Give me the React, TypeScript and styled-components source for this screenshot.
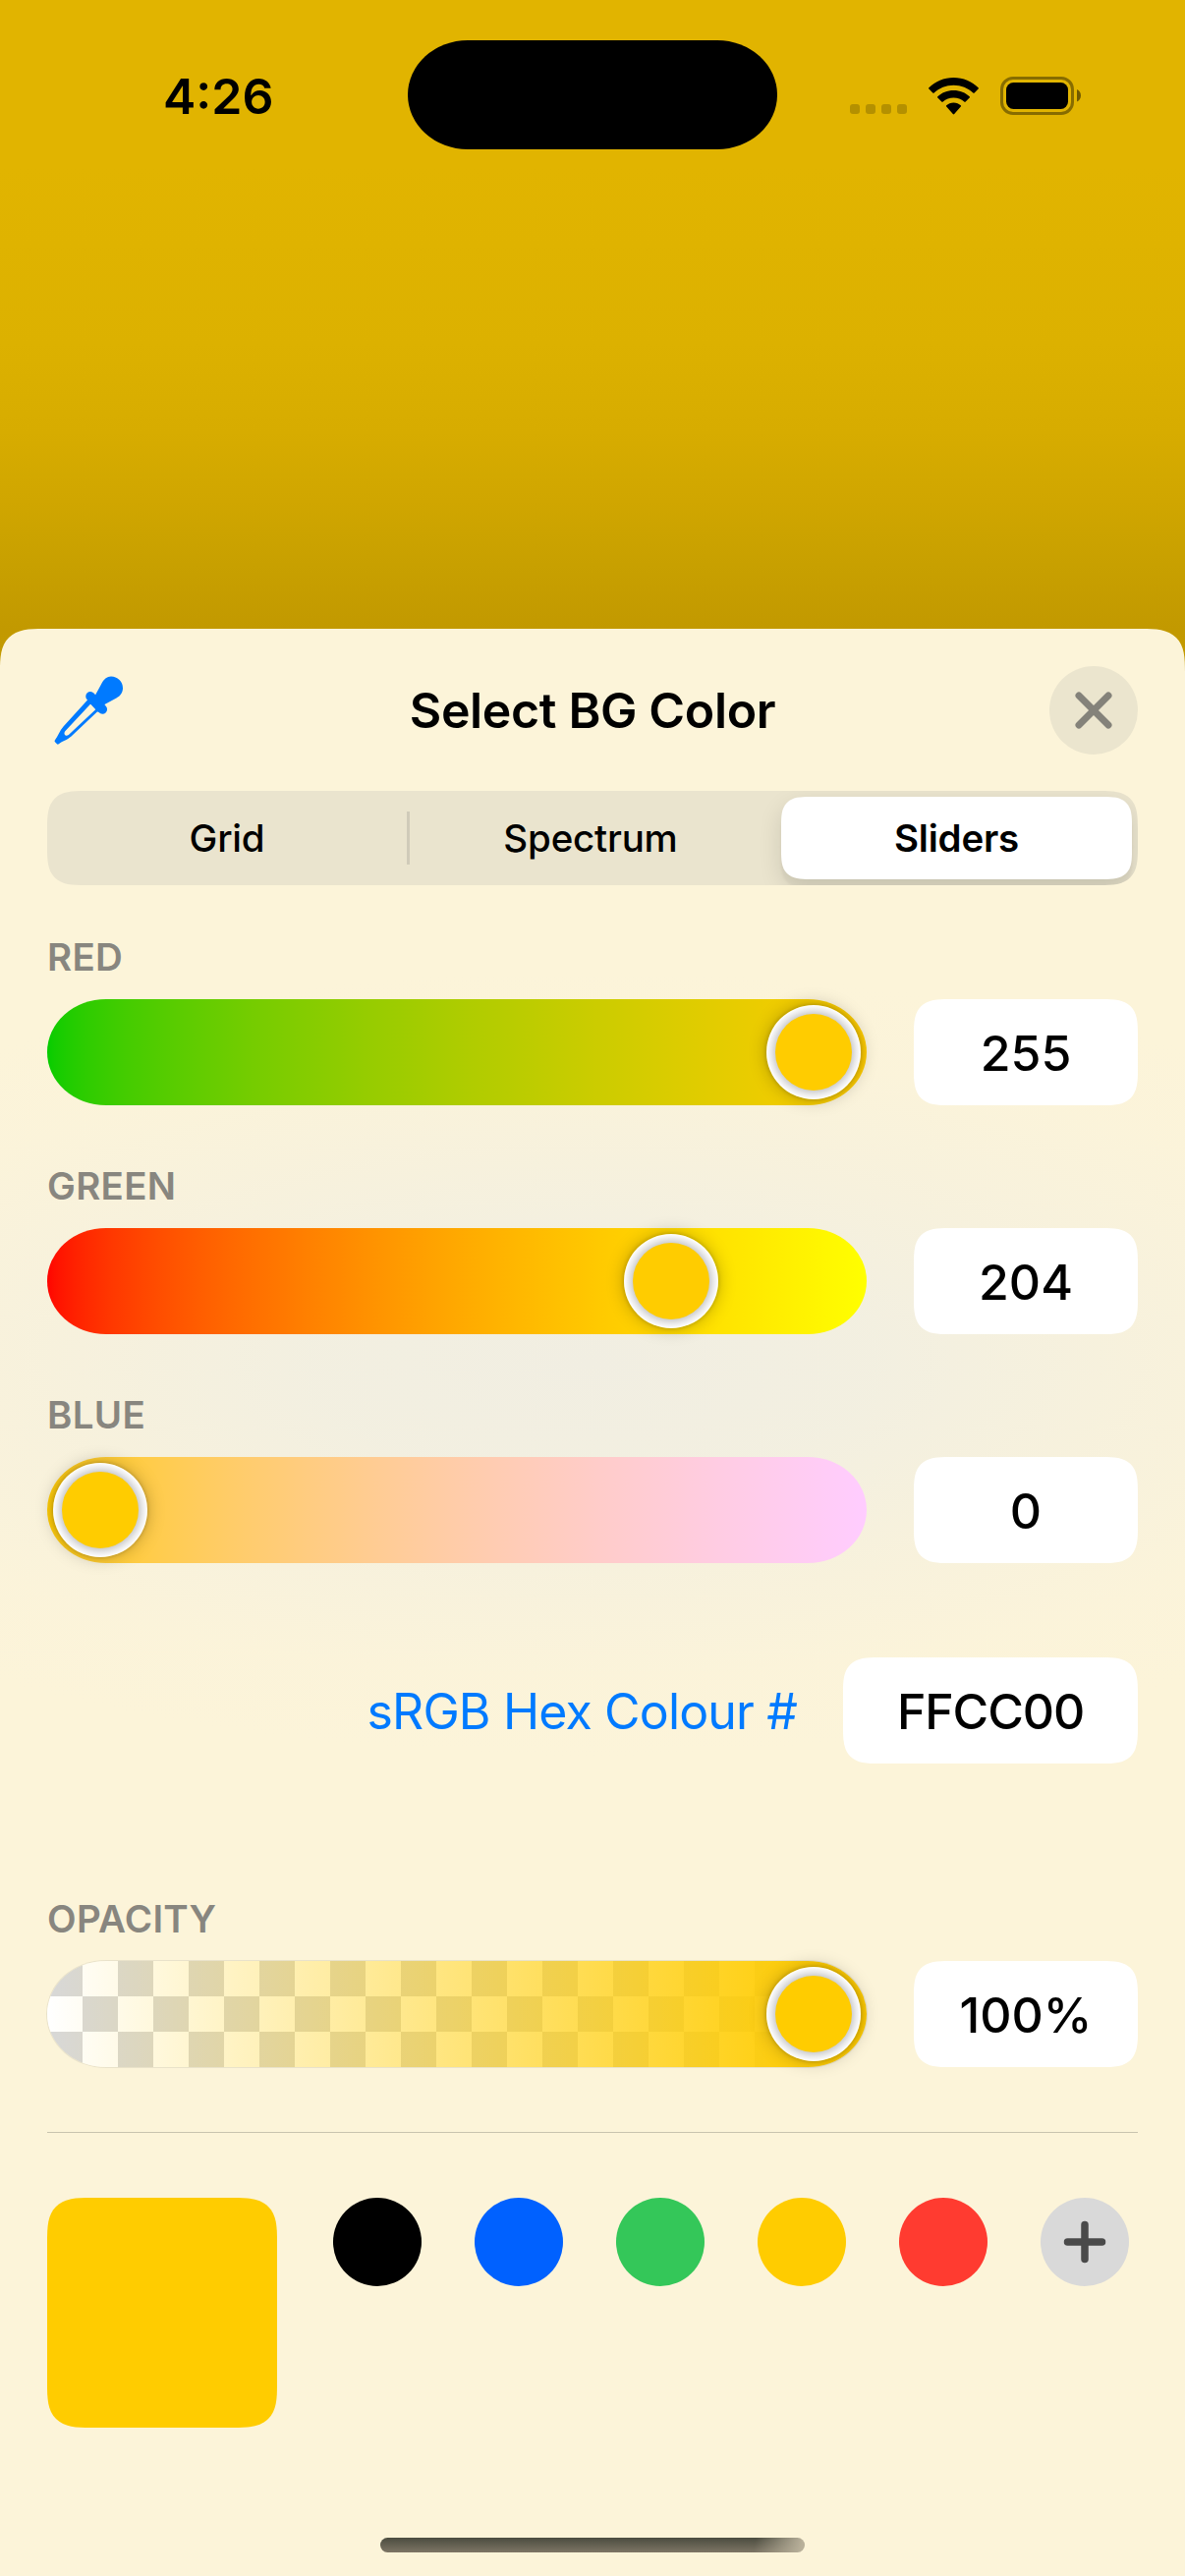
import React from 'react';
import styled, { createGlobalStyle } from 'styled-components';

const GlobalStyle = createGlobalStyle`
  *, *::before, *::after { box-sizing: border-box; }
  body { margin: 0; background: #e1b400; }
  button, input { font: inherit; color: inherit; border: 0; padding: 0; margin: 0; background: none; }
`;

const Screen = styled.div`
  width: 1206px;
  height: 2622px;
  display: flex;
  flex-direction: column;
  overflow: hidden;
  color: #000;
  font-family: Inter, "Liberation Sans", sans-serif;
  background: linear-gradient(
    to bottom,
    #e1b400 0,
    #e1b400 170px,
    #dfb300 250px,
    #dcb100 350px,
    #d7ac00 440px,
    #d0a600 510px,
    #c8a000 575px,
    #c29900 640px,
    #c49b00 700px
  );
`;

const StatusBar = styled.header`
  height: 640px;
  flex: none;
  display: grid;
  grid-template-columns: 415px 376px 415px;
  grid-template-rows: 111px;
  padding-top: 41px;
  align-items: center;
`;

const Clock = styled.time`
  padding: 3px 0 0 166px;
  font-size: 50px;
  line-height: 60px;
  font-weight: 600;
  letter-spacing: 0;
`;

const Island = styled.div`
  height: 111px;
  border-radius: 61px / 55.5px;
  background: #000;
`;

const StatusIcons = styled.div`
  display: flex;
  align-items: flex-end;
  height: 39px;
  padding-left: 74px;
  margin-top: 2px;
`;

const SignalDots = styled.div`
  display: flex;
  gap: 6px;
  width: 58px;
  margin: 0 22px 1px 0;
`;

const Dot = styled.i`
  width: 10px;
  height: 10px;
  border-radius: 3px;
  background: rgba(0, 0, 0, 0.2);
`;

const WifiSvg = styled.svg`
  width: 51px;
  height: 38px;
  margin: 0 22px 0.5px 0;
`;

const BatteryIcon = styled.svg`
  width: 83px;
  height: 39px;
`;

const Sheet = styled.main`
  flex: 1;
  padding: 38px 48px 0;
  display: flex;
  flex-direction: column;
  border-radius: 30px 30px 0 0;
  background:
    radial-gradient(
      ellipse 1020px 400px at 600px 748px,
      #f1eee2 0%,
      rgba(242, 239, 225, 0.94) 28%,
      rgba(245, 240, 222, 0.7) 54%,
      rgba(249, 242, 220, 0.3) 80%,
      rgba(252, 244, 217, 0) 100%
    ),
    #fcf4d9;
  @supports (corner-shape: squircle) {
    border-radius: 44px 44px 0 0;
    corner-shape: superellipse(1.6);
  }
`;

const TitleBar = styled.div`
  display: grid;
  grid-template-columns: 90px 1fr 90px;
  height: 90px;
  align-items: center;
`;

const PickButton = styled.button`
  display: flex;
  padding-left: 7px;
`;

const Title = styled.h1`
  margin: 0;
  text-align: center;
  font-size: 50px;
  line-height: 60px;
  font-weight: 600;
  letter-spacing: -0.35px;
`;

const CloseButton = styled.button`
  display: flex;
  align-items: center;
  justify-content: center;
  width: 90px;
  height: 90px;
  border-radius: 50%;
  background: #ebe5ce;
`;

const Segments = styled.nav`
  display: grid;
  grid-template-columns: 369px 368px 367px;
  align-items: center;
  height: 96px;
  margin-top: 37px;
  border-radius: 27px;
  background: #eae4ce;
  overflow: hidden;
  @supports (corner-shape: squircle) {
    border-radius: 38px;
    corner-shape: superellipse(1.6);
  }
`;

const Segment = styled.button<{ $active?: boolean; $divided?: boolean }>`
  height: ${(p) => (p.$active ? 84 : 54)}px;
  margin-left: ${(p) => (p.$active ? 10 : 0)}px;
  font-size: 38.5px;
  font-weight: ${(p) => (p.$active ? 600 : 500)};
  letter-spacing: -0.2px;
  border-right: ${(p) => (p.$divided ? '3px solid #d0cbb9' : '0 solid')};
  background: ${(p) => (p.$active ? '#fff' : 'transparent')};
  box-shadow: ${(p) => (p.$active ? '0 9px 24px rgba(0,0,0,0.12), 0 9px 3px rgba(0,0,0,0.04)' : 'none')};
  border-radius: ${(p) => (p.$active ? 21 : 0)}px;
  @supports (corner-shape: squircle) {
    border-radius: ${(p) => (p.$active ? 29 : 0)}px;
    corner-shape: superellipse(1.6);
  }
`;

const Channel = styled.section<{ $top: number }>`
  display: grid;
  grid-template-columns: 834px 228px;
  grid-template-rows: 48px 108px;
  column-gap: 48px;
  row-gap: 19px;
  margin-top: ${(p) => p.$top}px;
`;

const ChannelLabel = styled.h2`
  grid-column: 1 / -1;
  margin: 0;
  font-size: 38.5px;
  line-height: 48px;
  font-weight: 600;
  color: #88867f;
  letter-spacing: 0.3px;
`;

const Track = styled.div<{ $fill: string; $outlined?: boolean }>`
  display: flex;
  align-items: center;
  border-radius: 60px / 54px;
  background: ${(p) => p.$fill};
  box-shadow: ${(p) => (p.$outlined ? '0 0 0 1px rgba(120,120,110,0.14)' : 'none')};
`;

const Thumb = styled.span`
  width: 96px;
  height: 96px;
  padding: 9px;
  border-radius: 50%;
  background: radial-gradient(closest-side, #cdcdcd 80%, #e9e9e9 90%, #fbfbfb 98%);
  box-shadow: 0 0 18px rgba(0, 0, 0, 0.26), 0 0 4px rgba(0, 0, 0, 0.22);
  &::after {
    content: '';
    display: block;
    height: 78px;
    border-radius: 50%;
    background: #ffcc00;
  }
`;

const Field = styled.div<{ $width?: number; $spacing?: number }>`
  width: ${(p) => p.$width ?? 228}px;
  height: 108px;
  padding-top: 2px;
  display: flex;
  align-items: center;
  justify-content: center;
  background: #fff;
  font-size: 50px;
  font-weight: 500;
  letter-spacing: ${(p) => p.$spacing ?? 0}px;
  border-radius: 25px;
  @supports (corner-shape: squircle) {
    border-radius: 36px;
    corner-shape: superellipse(1.6);
  }
`;

const HexRow = styled.div`
  display: flex;
  justify-content: flex-end;
  align-items: center;
  gap: 47px;
  margin-top: 96px;
`;

const HexLabel = styled.button`
  padding-top: 2px;
  font-size: 50px;
  line-height: 60px;
  color: #007aff;
  letter-spacing: -0.85px;
`;

const Rule = styled.hr`
  width: 100%;
  height: 1px;
  border: 0;
  margin: 66px 0;
  background: #c8c3af;
`;

const Palette = styled.div`
  display: flex;
  align-items: flex-start;
`;

const CurrentColor = styled.div`
  width: 234px;
  height: 234px;
  margin-right: 57px;
  background: #ffcc00;
  border-radius: 30px;
  @supports (corner-shape: squircle) {
    border-radius: 44px;
    corner-shape: superellipse(1.6);
  }
`;

const Swatches = styled.div`
  display: flex;
  gap: 54px;
`;

const Swatch = styled.button<{ $color: string }>`
  display: flex;
  align-items: center;
  justify-content: center;
  width: 90px;
  height: 90px;
  border-radius: 50%;
  background: ${(p) => p.$color};
`;

const HomeIndicator = styled.div`
  width: 432px;
  height: 15px;
  margin: 112px auto 0;
  border-radius: 8px;
  background:
    linear-gradient(100deg, rgba(186, 178, 155, 0) 88%, #b8b09a 99%),
    linear-gradient(to bottom, #4b4c3f, #7d7565);
`;

// Interpolates channel values with a gamma curve so mid tones stay bright.
const curve = (at: (v: number) => string, gamma: number) =>
  `linear-gradient(to right, ${Array.from({ length: 33 }, (_, i) => {
    const t = (i / 32) ** 2;
    return `${at(Math.round(255 * t ** gamma))} ${(t * 100).toFixed(2)}%`;
  }).join(', ')})`;

const CHANNELS = [
  { label: 'RED', value: 255, fill: curve((v) => `rgb(${v},204,0)`, 0.565) },
  { label: 'GREEN', value: 204, fill: curve((v) => `rgb(255,${v},0)`, 0.6) },
  { label: 'BLUE', value: 0, fill: curve((v) => `rgb(255,204,${v})`, 0.6) },
];

const CHECKER =
  'linear-gradient(to right, rgba(255,204,0,0), #ffcc00 96%), ' +
  'repeating-conic-gradient(#fff 0 25%, #d8d8d8 0 50%) 0 0 / 72px 72px';

const SAVED = ['#000000', '#0061ff', '#34c759', '#ffcc00', '#ff3b30'];

function Slider({ value, max, fill, outlined }: { value: number; max: number; fill: string; outlined?: boolean }) {
  return (
    <Track $fill={fill} $outlined={outlined}>
      <Thumb style={{ marginLeft: Math.round(6 + (value / max) * 726) }} />
    </Track>
  );
}

function Wifi() {
  return (
    <WifiSvg viewBox="0 0 51 38">
      <path d="M25.500 0C35.300 0 44.200 3.800 50.600 10.200Q51.300 10.900 50.600 11.600L46.700 15.400Q46 16 45.300 15.400C40.200 10.600 33.200 7.700 25.500 7.700S10.800 10.600 5.700 15.400Q5 16 4.300 15.400L.4 11.600Q-.3 10.900 .4 10.200C6.800 3.800 15.700 0 25.500 0Z" />
      <path d="M25.500 12.900C31.900 12.900 37.700 15.300 41.700 19.200Q42.400 19.900 41.700 20.600L37.700 24.600Q37 25.200 36.300 24.600C33.400 22 29.600 20.600 25.500 20.600S17.600 22 14.700 24.600Q14 25.200 13.300 24.600L9.300 20.600Q8.600 19.900 9.300 19.200C13.300 15.300 19.100 12.900 25.500 12.900Z" />
      <path d="M25.500 25.400C28.400 25.400 31 26.500 32.800 28.200Q33.500 28.900 32.800 29.600L26.200 37.100Q25.500 37.800 24.800 37.100L18.200 29.600Q17.500 28.900 18.200 28.200C20 26.500 22.600 25.400 25.500 25.400Z" />
    </WifiSvg>
  );
}

function Battery() {
  return (
    <BatteryIcon viewBox="0 0 83 39">
      <rect x="1.500" y="1.500" width="72" height="36" rx="11.500" fill="none" stroke="#000" strokeOpacity=".4" strokeWidth="3" />
      <rect x="6" y="6" width="63" height="27" rx="7.500" />
      <path d="M78 13C80.500 14 82 16.500 82 19.200S80.500 24.500 78 25.500Z" fillOpacity=".5" />
    </BatteryIcon>
  );
}

function Eyedropper() {
  return (
    <svg width="70" height="70" viewBox="0 0 70 70" fill="#007aff">
      <path d="M38 21L42 19.500L48 8.500C50.500 3.500 54 .6 58 .6A12 12 0 0 1 70 12.600C70 17 67.500 20.500 63.500 22.500L51.500 29L49.500 34L45 37L34 25Z" />
      <path d="M37 20.800L49.300 34" stroke="#007aff" strokeWidth="9.500" strokeLinecap="round" />
      <path
        fillRule="evenodd"
        d="M34.500 24L9.500 51.500C5.500 56 4 61.500.8 65.500Q.2 66.500 1 67.300L3 69.300Q3.800 70 4.800 69.200C8.500 66.300 13 65.500 17.500 61.500L45.500 35ZM37.200 28.600L11.500 56C9 59 11.700 62.300 14.800 60L42.500 34Z"
      />
    </svg>
  );
}

export default function App() {
  return (
    <>
      <GlobalStyle />
      <Screen>
        <StatusBar>
          <Clock>4:26</Clock>
          <Island />
          <StatusIcons>
            <SignalDots>
              <Dot />
              <Dot />
              <Dot />
              <Dot />
            </SignalDots>
            <Wifi />
            <Battery />
          </StatusIcons>
        </StatusBar>
        <Sheet>
          <TitleBar>
            <PickButton aria-label="Pick colour">
              <Eyedropper />
            </PickButton>
            <Title>Select BG Color</Title>
            <CloseButton aria-label="Close">
              <svg width="38" height="38" viewBox="0 0 38 38" stroke="#84827a" strokeWidth="7" strokeLinecap="round">
                <path d="M4 4L34 34M34 4L4 34" />
              </svg>
            </CloseButton>
          </TitleBar>
          <Segments>
            <Segment $divided>Grid</Segment>
            <Segment>Spectrum</Segment>
            <Segment $active>Sliders</Segment>
          </Segments>
          {CHANNELS.map((c, i) => (
            <Channel key={c.label} $top={i === 0 ? 49 : 58}>
              <ChannelLabel>{c.label}</ChannelLabel>
              <Slider value={c.value} max={255} fill={c.fill} />
              <Field>{c.value}</Field>
            </Channel>
          ))}
          <HexRow>
            <HexLabel>sRGB Hex Colour #</HexLabel>
            <Field $width={300} $spacing={-1.1}>FFCC00</Field>
          </HexRow>
          <Channel $top={134}>
            <ChannelLabel>OPACITY</ChannelLabel>
            <Slider value={100} max={100} fill={CHECKER} outlined />
            <Field>100%</Field>
          </Channel>
          <Rule />
          <Palette>
            <CurrentColor />
            <Swatches>
              {SAVED.map((color) => (
                <Swatch key={color} $color={color} />
              ))}
              <Swatch $color="#d9d9d9" aria-label="Add">
                <svg width="44" height="44" viewBox="0 0 44 44" stroke="#4a4a4a" strokeWidth="7.500" strokeLinecap="round">
                  <path d="M22 4.500V39.500M4.500 22H39.500" />
                </svg>
              </Swatch>
            </Swatches>
          </Palette>
          <HomeIndicator />
        </Sheet>
      </Screen>
    </>
  );
}
